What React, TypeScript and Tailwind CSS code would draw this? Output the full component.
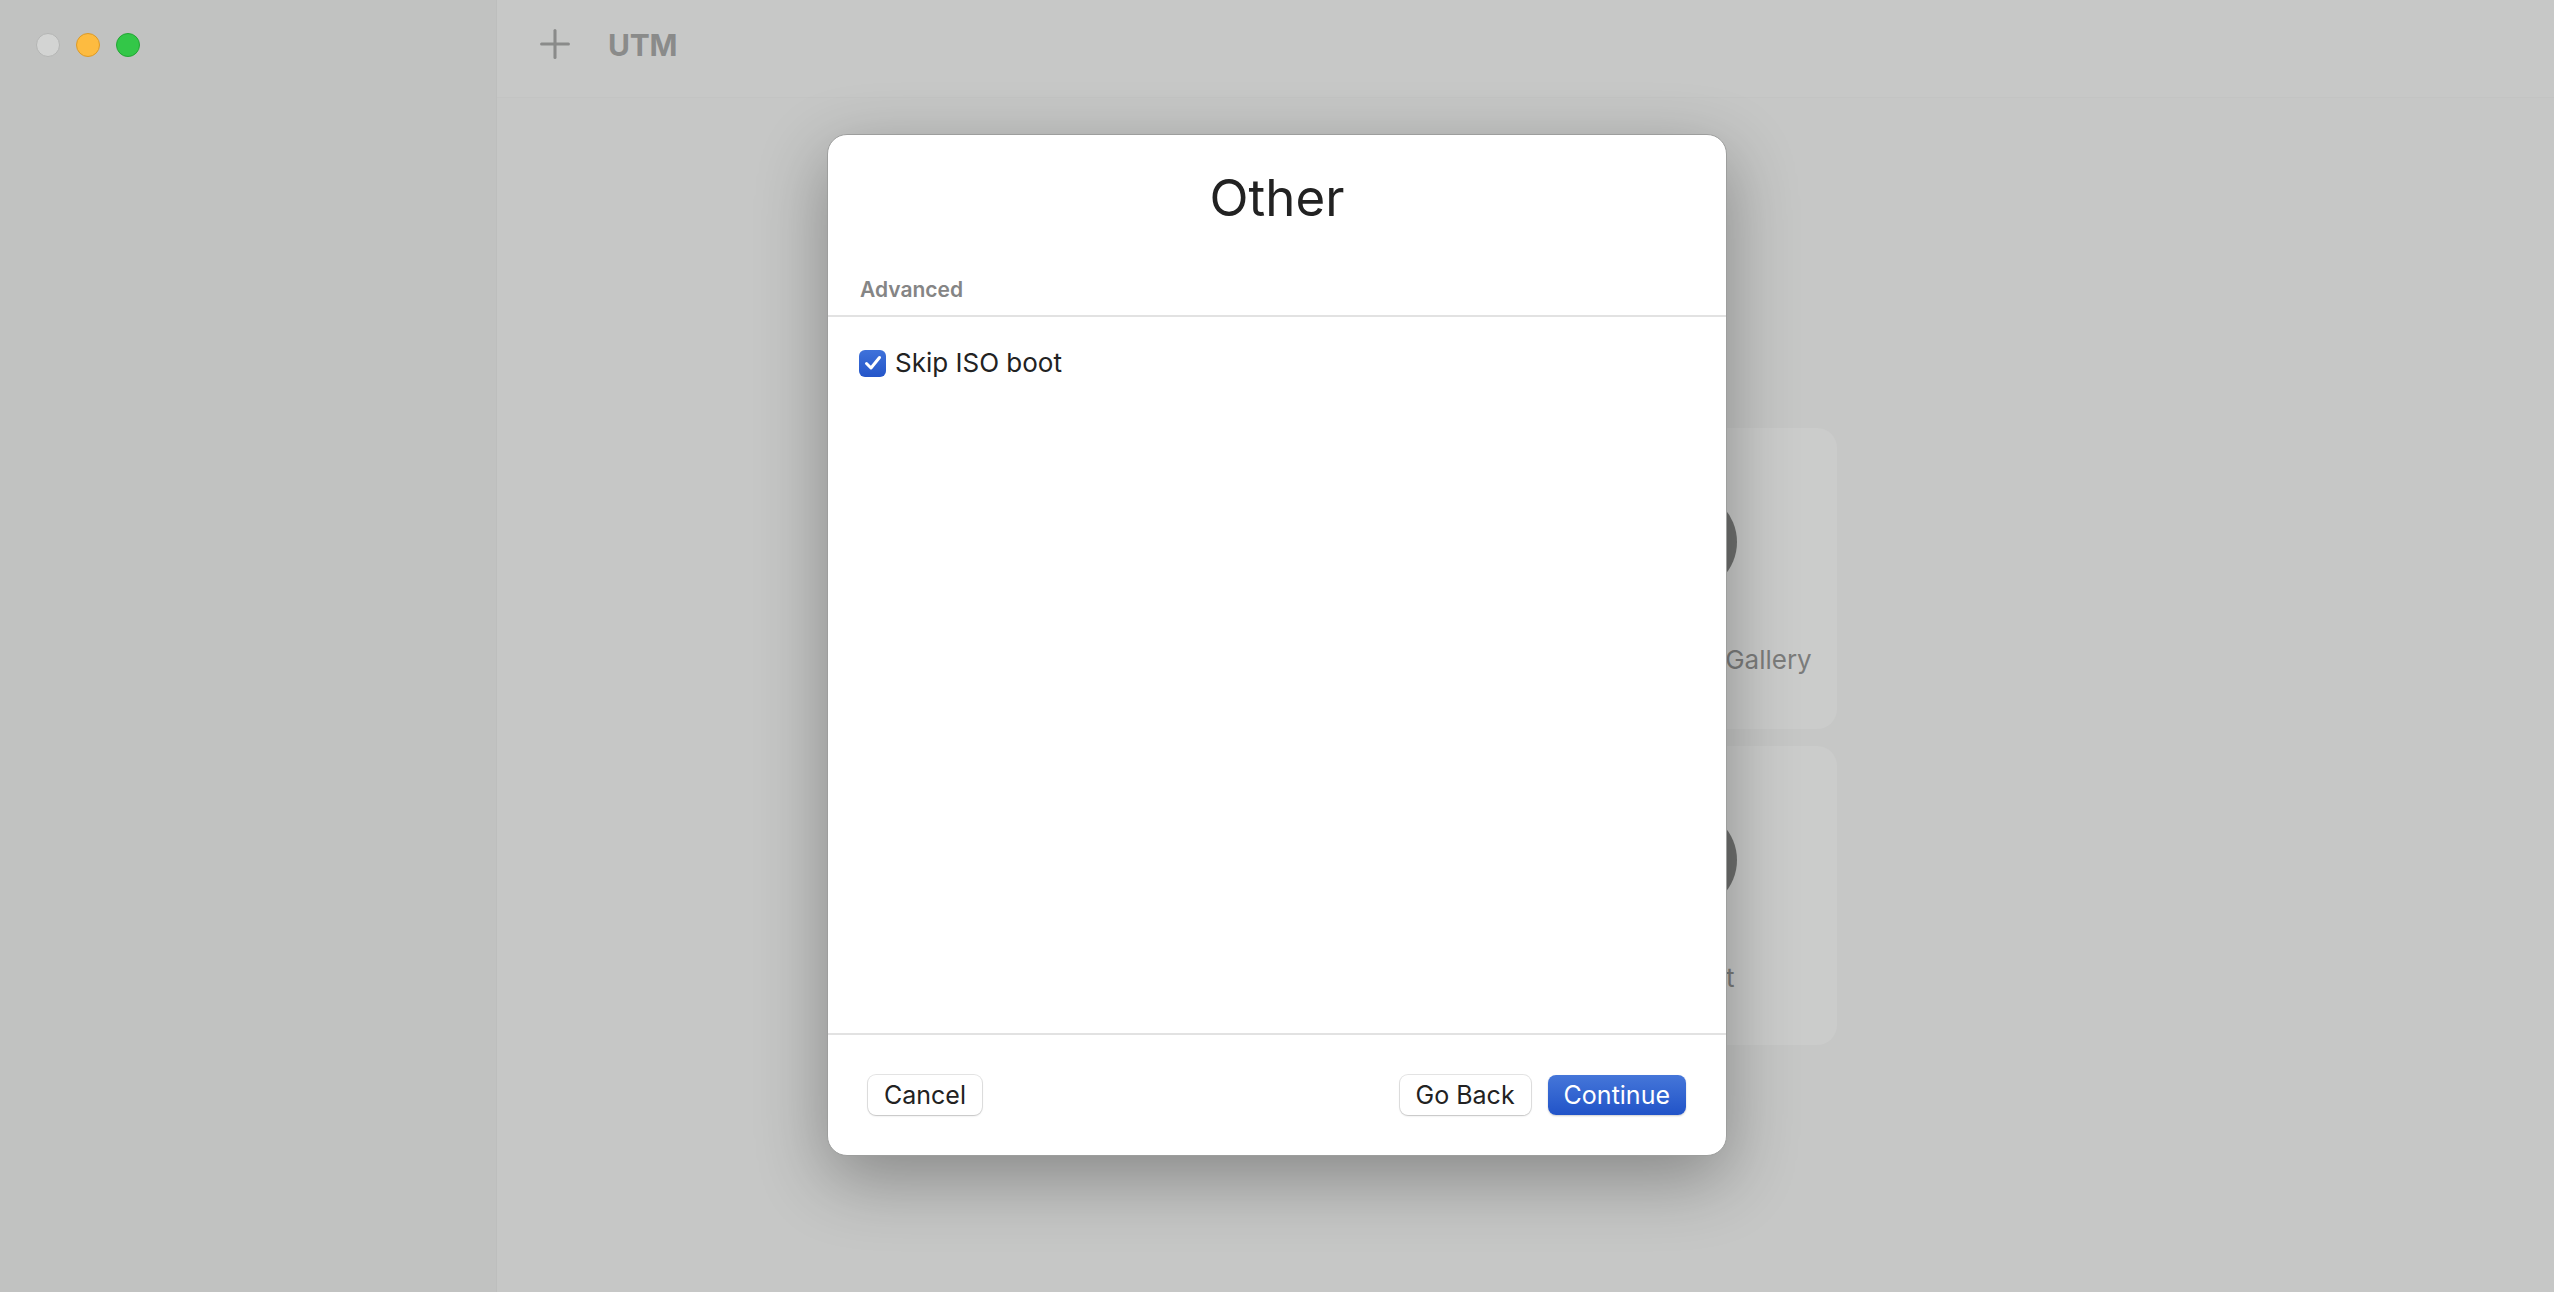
import { Plus } from "lucide-react";

const font = { fontFamily: "Inter, 'Liberation Sans', sans-serif" };

const TrafficLights = () => (
  <div className="flex items-center gap-[16px] pl-[36px] pt-[33px]">
    <span className="w-[24px] h-[24px] rounded-full bg-[#d3d4d3] border border-[#b4b5b4]" />
    <span className="w-[24px] h-[24px] rounded-full bg-[#fdbb40] border border-[#dc9a28]" />
    <span className="w-[24px] h-[24px] rounded-full bg-[#33c748] border border-[#23a634]" />
  </div>
);

const WelcomeCard = ({ label }: { label: string }) => (
  <div className="rounded-[20px] bg-[#cbcccb] flex flex-col items-center pt-[63px]">
    <div className="w-[102px] h-[102px] rounded-full bg-[#707170]" />
    <span className="mt-[51px] text-[26px] leading-[32px] text-[#7b7c7b]">{label}</span>
  </div>
);

const Button = ({ children, primary }: { children: string; primary?: boolean }) => (
  <button
    className={
      primary
        ? "h-[40px] px-[16px] rounded-[8px] text-[25px] leading-none text-white bg-gradient-to-b from-[#4576d9] to-[#2153c8] shadow-[0_1px_2px_rgba(0,0,0,0.2)]"
        : "h-[40px] px-[16px] rounded-[8px] text-[25px] leading-none text-[#222] bg-white shadow-[0_0_0_1px_rgba(0,0,0,0.1),0_1px_2px_rgba(0,0,0,0.15)]"
    }
  >
    {children}
  </button>
);

export default function App() {
  return (
    <div style={font} className="relative w-[2554px] h-[1292px] flex overflow-hidden bg-[#c6c7c6]">
      {/* sidebar */}
      <aside className="w-[497px] h-full bg-[#c1c2c1] border-r border-[#bdbebd]">
        <TrafficLights />
      </aside>

      {/* main area */}
      <main className="flex-1 flex flex-col">
        <header className="h-[98px] flex items-start gap-[30px] pl-[35px] pt-[21px] bg-[#c7c8c7] border-b border-[#c3c4c3]">
          <Plus size={46} strokeWidth={1.6} className="text-[#8a8b8a]" />
          <span className="mt-[9px] text-[30px] leading-[30px] font-bold text-[#8a8b8a] tracking-[-0.3px]">UTM</span>
        </header>
        <div className="flex-1 flex justify-center pt-[330px]">
          <div className="grid grid-cols-[303px_303px] grid-rows-[301px_299px] gap-[17px]">
            <WelcomeCard label="Create a New Virtual Machine" />
            <WelcomeCard label="Browse UTM Gallery" />
            <WelcomeCard label="User Guide" />
            <WelcomeCard label="Support" />
          </div>
        </div>
      </main>

      {/* sheet */}
      <div className="absolute inset-0 flex justify-center pt-[134px]">
        <div className="w-[900px] h-[1022px] bg-white rounded-[20px] border border-[#9d9e9d] shadow-[0_22px_70px_rgba(0,0,0,0.32)] flex flex-col overflow-hidden">
          <h1 className="text-center text-[51px] leading-[60px] text-[#222] pt-[33px]">Other</h1>
          <div className="px-[32px] pt-[49px] pb-[12px] text-[21px] leading-[26px] font-semibold text-[#858585]">
            Advanced
          </div>
          <div className="h-[2px] bg-[#e2e2e2]" />
          <label className="flex items-center gap-[9px] px-[31px] pt-[31px]">
            <span className="w-[27px] h-[27px] rounded-[6px] bg-gradient-to-b from-[#3f72da] to-[#2455c9] flex items-center justify-center">
              <svg width="18" height="16" viewBox="0 0 18 16" fill="none">
                <path d="M2.5 8.5 L7 13 L15.5 2.5" stroke="white" strokeWidth="3" strokeLinecap="round" strokeLinejoin="round" />
              </svg>
            </span>
            <span className="text-[26px] leading-[30px] text-[#222]">Skip ISO boot</span>
          </label>
          <div className="flex-1" />
          <div className="h-[2px] bg-[#e2e2e2]" />
          <div className="h-[120px] flex items-start justify-between px-[40px] pt-[40px]">
            <Button>Cancel</Button>
            <div className="flex gap-[17px]">
              <Button>Go Back</Button>
              <Button primary>Continue</Button>
            </div>
          </div>
        </div>
      </div>
    </div>
  );
}
